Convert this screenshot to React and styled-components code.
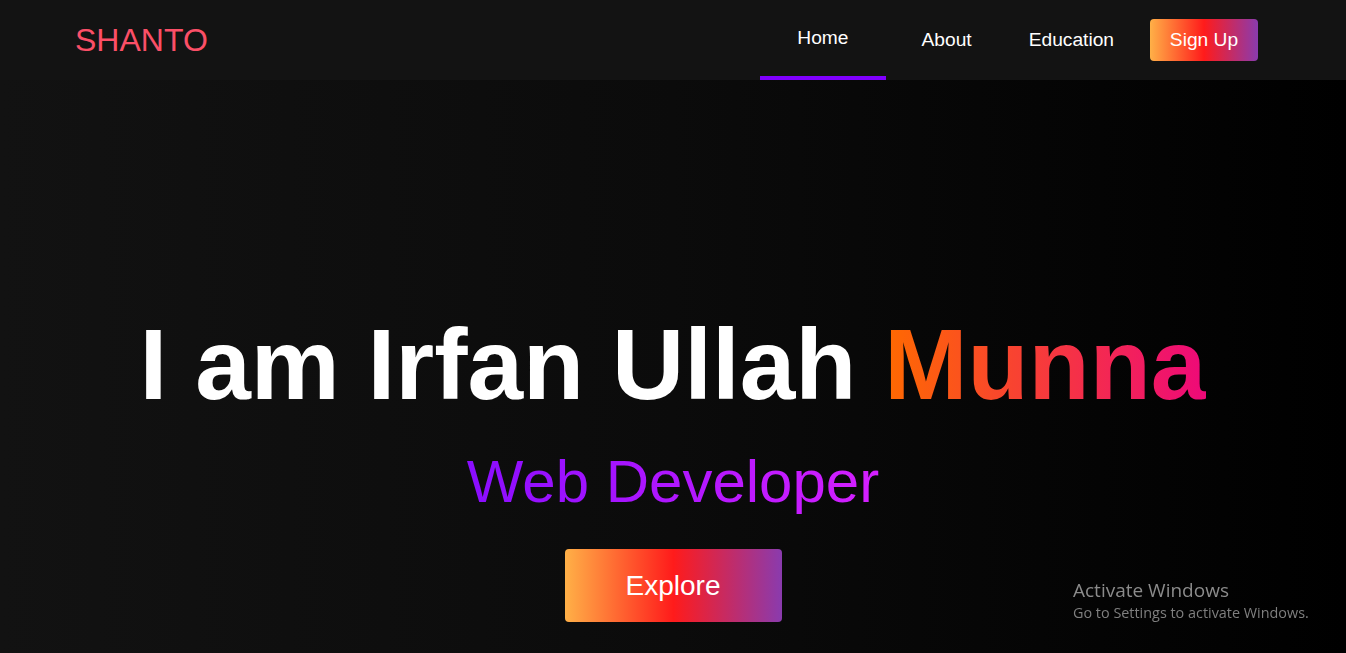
import React from "react";
import styled, { createGlobalStyle } from "styled-components";

const GlobalStyle = createGlobalStyle`
  * {
    box-sizing: border-box;
  }
  body {
    margin: 0;
    background: #000;
    font-family: "Liberation Sans", Arial, sans-serif;
    overflow: hidden;
  }
`;

const App = () => {
  return (
    <>
      <GlobalStyle />
      <Navbar>
        <Logo>SHANTO</Logo>
        <NavLinks>
          <NavLink $active>Home</NavLink>
          <NavLink>About</NavLink>
          <NavLink>Education</NavLink>
          <SignUp>Sign Up</SignUp>
        </NavLinks>
      </Navbar>
      <Hero>
        <Title>
          I am Irfan Ullah <Name>Munna</Name>
        </Title>
        <Role>Web Developer</Role>
        <Explore>Explore</Explore>
      </Hero>
      <Watermark>
        <p>Activate Windows</p>
        <p>Go to Settings to activate Windows.</p>
      </Watermark>
    </>
  );
};

export default App;

const gradientBtn = `linear-gradient(to right, #ffb047 0%, #ff1b1b 50%, #8a3bae 100%)`;

const Navbar = styled.nav`
  height: 80px;
  background-color: #131313;
  display: flex;
  align-items: stretch;
  justify-content: space-between;
  padding: 0 88px 0 75px;
`;

const Logo = styled.div`
  display: flex;
  align-items: center;
  font-size: 32px;
  color: #fb4f67;
  cursor: pointer;
`;

const NavLinks = styled.div`
  display: flex;
  align-items: stretch;
  gap: 15px;
`;

const NavLink = styled.a`
  display: flex;
  align-items: center;
  font-size: 19.2px;
  color: #fff;
  cursor: pointer;
  padding: ${(p) => (p.$active ? "0 37px" : "0 21px")};
  border-bottom: ${(p) => (p.$active ? "4px solid #8000ff" : "none")};
`;

const SignUp = styled.button`
  align-self: center;
  height: 42px;
  width: 108px;
  border: none;
  border-radius: 4px;
  background: ${gradientBtn};
  color: #fff;
  font-family: "Liberation Sans", Arial, sans-serif;
  font-size: 19.2px;
  cursor: pointer;
`;

const Hero = styled.section`
  height: calc(100vh - 80px);
  background: linear-gradient(to right, #121212 0%, #0b0b0b 50%, #000 100%);
  display: flex;
  flex-direction: column;
  align-items: center;
  padding-top: 227px;
`;

const Title = styled.h1`
  margin: 0;
  font-size: 100px;
  font-weight: 700;
  color: #fff;
  line-height: 1.15;
  white-space: nowrap;
`;

const Name = styled.span`
  background: linear-gradient(to right, #ff6a00, #ee0979);
  -webkit-background-clip: text;
  background-clip: text;
  color: transparent;
`;

const Role = styled.h2`
  margin: 25px 0 0;
  font-size: 60px;
  font-weight: 400;
  line-height: 1.15;
  background: linear-gradient(to right, #8a0dff, #d520ff);
  -webkit-background-clip: text;
  background-clip: text;
  color: transparent;
`;

const Explore = styled.button`
  margin-top: 33px;
  height: 73px;
  width: 217px;
  border: none;
  border-radius: 4px;
  background: ${gradientBtn};
  color: #fff;
  font-family: "Liberation Sans", Arial, sans-serif;
  font-size: 28px;
  cursor: pointer;
`;

const Watermark = styled.div`
  position: fixed;
  left: 1073px;
  top: 578px;
  color: #8b8b8b;
  font-family: "Open Sans", "Noto Sans", sans-serif;
  pointer-events: none;
  p {
    margin: 0;
    &:nth-child(1) {
      font-size: 19px;
      line-height: 25px;
    }
    &:nth-child(2) {
      font-size: 14.4px;
      line-height: 20px;
      color: #7f7f7f;
    }
  }
`;
